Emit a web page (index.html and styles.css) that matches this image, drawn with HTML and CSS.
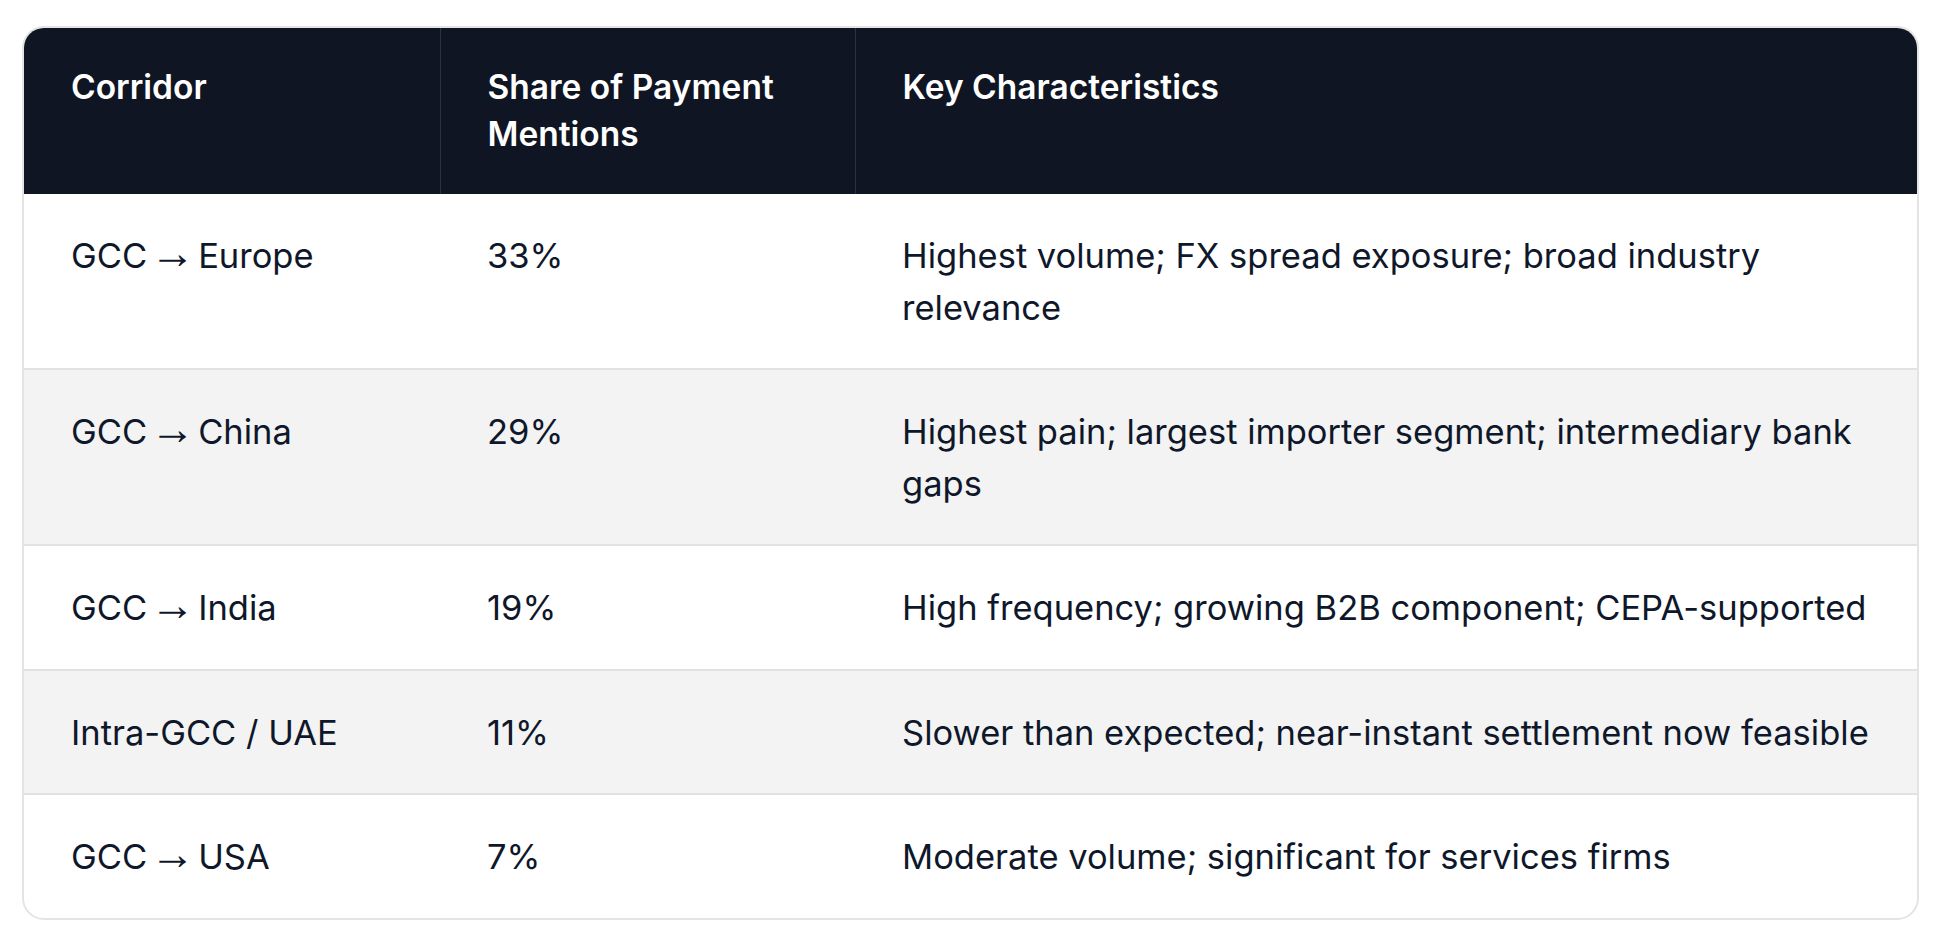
FILE: index.html
```html
<!DOCTYPE html>
<html lang="en">
<head>
<meta charset="utf-8">
<title>Payment Corridors</title>
<link rel="stylesheet" href="styles.css">
</head>
<body>
<div class="page">
  <div class="card">
    <table class="corridors">
      <colgroup>
        <col class="c1">
        <col class="c2">
        <col class="c3">
      </colgroup>
      <thead>
        <tr>
          <th>Corridor</th>
          <th>Share of Payment Mentions</th>
          <th>Key Characteristics</th>
        </tr>
      </thead>
      <tbody>
        <tr>
          <td>GCC<span class="arr"> → </span>Europe</td>
          <td>33%</td>
          <td>Highest volume; FX spread exposure; broad industry relevance</td>
        </tr>
        <tr class="alt">
          <td>GCC<span class="arr"> → </span>China</td>
          <td>29%</td>
          <td>Highest pain; largest importer segment; intermediary bank gaps</td>
        </tr>
        <tr>
          <td>GCC<span class="arr"> → </span>India</td>
          <td>19%</td>
          <td>High frequency; growing B2B component; CEPA-supported</td>
        </tr>
        <tr class="alt">
          <td>Intra-GCC / UAE</td>
          <td>11%</td>
          <td>Slower than expected; near-instant settlement now feasible</td>
        </tr>
        <tr class="last">
          <td>GCC<span class="arr"> → </span>USA</td>
          <td>7%</td>
          <td>Moderate volume; significant for services firms</td>
        </tr>
      </tbody>
    </table>
  </div>
</div>
</body>
</html>
```

FILE: styles.css
```css
html, body {
  margin: 0;
  padding: 0;
  background: #ffffff;
}

.page {
  padding: 26px 25px 0 22px;
  font-family: Inter, "Noto Sans", sans-serif;
}

.card {
  border: 2px solid #e4e4e4;
  border-radius: 22px;
  overflow: hidden;
  background: #ffffff;
}

.corridors {
  width: 100%;
  border-collapse: collapse;
  table-layout: fixed;
}

.c1 { width: 416px; }
.c2 { width: 415px; }

.corridors th {
  background: #0f1523;
  color: #ffffff;
  text-align: left;
  vertical-align: top;
  font-weight: 600;
  font-size: 33.5px;
  line-height: 47px;
  padding: 36px 30px 36px 47px;
  border-left: 1px solid #2a3140;
}

.corridors th:first-child {
  border-left: none;
}

.corridors td {
  color: #0f172a;
  text-align: left;
  vertical-align: top;
  font-size: 34.5px;
  line-height: 51.5px;
  padding: 36px 16px 35px 47px;
  border-bottom: 2px solid #e2e2e2;
}

.corridors .arr {
  font-family: "Liberation Sans", sans-serif;
  font-size: 1.3em;
  line-height: 0;
  word-spacing: -9.4px;
}

.corridors tr.alt td {
  background: #f3f3f3;
}

.corridors tr.last td {
  border-bottom: none;
}
```
